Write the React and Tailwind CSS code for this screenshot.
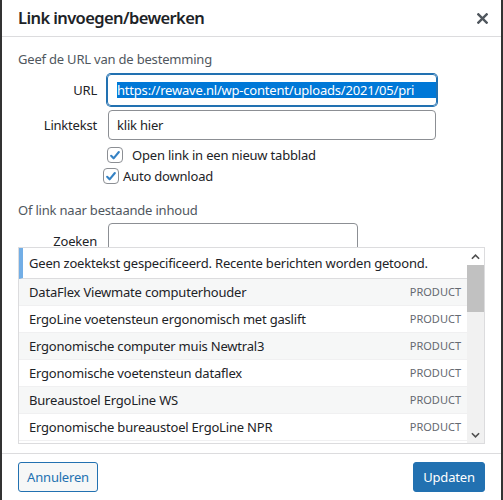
import React from 'react';

const results = [
  'DataFlex Viewmate computerhouder',
  'ErgoLine voetensteun ergonomisch met gaslift',
  'Ergonomische computer muis Newtral3',
  'Ergonomische voetensteun dataflex',
  'Bureaustoel ErgoLine WS',
  'Ergonomische bureaustoel ErgoLine NPR',
];

const CheckBox = () => (
  <span className="flex h-[16px] w-[16px] shrink-0 items-center justify-center rounded-[4px] border border-[#8c8f94] bg-white">
    <svg viewBox="0 0 20 20" className="h-[15px] w-[15px]">
      <path d="M4.5 10.5l3.5 3.5 7.5-9" fill="none" stroke="#3582c4" strokeWidth="3" strokeLinecap="round" strokeLinejoin="round" />
    </svg>
  </span>
);

const App = () => {
  return (
    <div className="h-[500px] w-[503px] overflow-hidden bg-[#333333] px-[2px] font-['Noto_Sans',sans-serif] text-[13px] leading-[18px] tracking-[-0.2px] text-[#1d2327]">
      <div className="flex h-[500px] flex-col bg-white">
        {/* header */}
        <div className="flex h-[37px] shrink-0 items-center justify-between border-b border-[#dcdcde] pl-4 pr-[13px]">
          <h1 className="text-[16.5px] font-semibold leading-none tracking-[-0.6px] text-[#1d2327]">Link invoegen/bewerken</h1>
          <svg viewBox="0 0 12 12" className="h-[11px] w-[11px]">
            <path d="M1.5 1.5l9 9M10.5 1.5l-9 9" stroke="#50575e" strokeWidth="2.6" strokeLinecap="square" />
          </svg>
        </div>

        {/* body */}
        <div className="flex-1 px-4 pt-[13px]">
          <p className="text-[#50575e]">Geef de URL van de bestemming</p>

          <div className="mt-[6px] flex items-center gap-[10px]">
            <label className="w-[79px] text-right">URL</label>
            <div className="flex h-[32px] w-[330px] items-center overflow-hidden whitespace-nowrap rounded-[4px] border border-[#2271b1] pl-[9px] shadow-[0_0_0_1px_#2271b1]">
              <span className="bg-[#0078d7] pr-[40px] leading-[16px] text-white">https://rewave.nl/wp-content/uploads/2021/05/pri</span>
            </div>
          </div>

          <div className="mt-[4px] flex items-center gap-[10px]">
            <label className="w-[79px] text-right">Linktekst</label>
            <div className="ml-[1px] flex h-[30px] w-[328px] items-center rounded-[4px] border border-[#8c8f94] pl-[8px]">
              klik hier
            </div>
          </div>

          <div className="mt-[7px] flex h-[16px] items-center gap-[9px] pl-[89px]">
            <CheckBox />
            <span>Open link in een nieuw tabblad</span>
          </div>
          <div className="mt-[5px] flex h-[16px] items-center gap-[4px] pl-[85px]">
            <CheckBox />
            <span>Auto download</span>
          </div>

          <p className="mt-[17px] text-[#50575e]">Of link naar bestaande inhoud</p>

          <div className="mt-[4px] flex items-center gap-[10px]">
            <label className="w-[79px] pt-[6px] text-right">Zoeken</label>
            <div className="ml-[1px] h-[30px] w-[250px] rounded-[4px] border border-[#8c8f94]" />
          </div>

          {/* results */}
          <div className="relative -mt-[6px] flex h-[197px] border border-[#dcdcde] bg-white">
            <div className="flex-1 overflow-hidden">
              <div className="flex h-[31px] items-center border-b border-l-4 border-[#dcdcde] border-l-[#72aee6] pl-[6px]">
                Geen zoektekst gespecificeerd. Recente berichten worden getoond.
              </div>
              {results.map((r, i) => (
                <div
                  key={r}
                  className={`flex h-[27px] items-center justify-between border-b border-[#f0f0f1] pl-[10px] pr-[6px] ${i % 2 === 0 ? 'bg-[#f6f7f7]' : 'bg-white'}`}
                >
                  <span>{r}</span>
                  <span className="text-[11px] tracking-normal text-[#646970]">PRODUCT</span>
                </div>
              ))}
            </div>
            <div className="flex w-[17px] flex-col bg-[#f1f1f1]">
              <div className="flex h-[17px] items-center justify-center bg-white">
                <svg viewBox="0 0 10 6" className="h-[6px] w-[9px]">
                  <path d="M1 5l4-4 4 4" fill="none" stroke="#505050" strokeWidth="1.8" />
                </svg>
              </div>
              <div className="h-[47px] bg-[#c1c1c1]" />
              <div className="flex-1" />
              <div className="flex h-[17px] items-center justify-center">
                <svg viewBox="0 0 10 6" className="h-[6px] w-[9px]">
                  <path d="M1 1l4 4 4-4" fill="none" stroke="#505050" strokeWidth="1.8" />
                </svg>
              </div>
            </div>
          </div>
        </div>

        {/* footer */}
        <div className="flex h-[47px] shrink-0 items-start justify-between border-t border-[#dcdcde] px-4 pt-[8px]">
          <button className="h-[30px] w-[80px] rounded-[3px] border border-[#2271b1] bg-[#f6f7f7] text-[#2271b1]">Annuleren</button>
          <button className="h-[30px] w-[72px] rounded-[3px] border border-[#2271b1] bg-[#2271b1] text-white">Updaten</button>
        </div>
      </div>
    </div>
  );
};

export default App;
